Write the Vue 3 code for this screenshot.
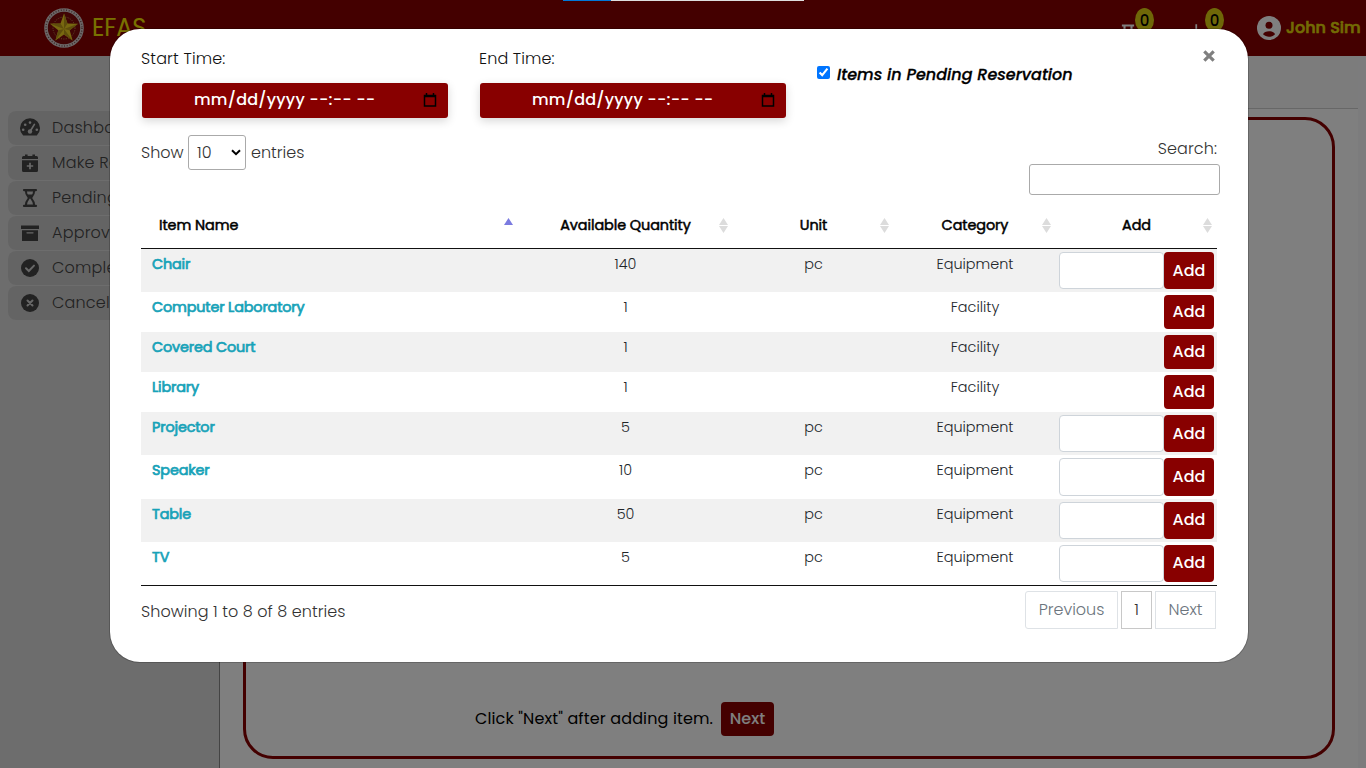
<script setup>
import { ref } from 'vue'

const menu = [
  { label: 'Dashboard', icon: 'gauge' },
  { label: 'Make Reservation', icon: 'plus' },
  { label: 'Pending', icon: 'hourglass' },
  { label: 'Approved', icon: 'archive' },
  { label: 'Completed', icon: 'check' },
  { label: 'Cancelled', icon: 'cancel' },
]
const columns = [
  { label: 'Item Name', cls: 'h-name' },
  { label: 'Available Quantity', cls: 'h-qty' },
  { label: 'Unit', cls: 'h-unit' },
  { label: 'Category', cls: 'h-cat' },
  { label: 'Add', cls: 'h-add' },
]
const items = [
  { name: 'Chair', qty: 140, unit: 'pc', category: 'Equipment' },
  { name: 'Computer Laboratory', qty: 1, unit: '', category: 'Facility' },
  { name: 'Covered Court', qty: 1, unit: '', category: 'Facility' },
  { name: 'Library', qty: 1, unit: '', category: 'Facility' },
  { name: 'Projector', qty: 5, unit: 'pc', category: 'Equipment' },
  { name: 'Speaker', qty: 10, unit: 'pc', category: 'Equipment' },
  { name: 'Table', qty: 50, unit: 'pc', category: 'Equipment' },
  { name: 'TV', qty: 5, unit: 'pc', category: 'Equipment' },
]
const pendingOnly = ref(true)
</script>

<template>
  <div class="page">
    <header class="topbar">
      <svg class="seal" viewBox="0 0 40 40">
        <circle cx="20" cy="20" r="18" fill="#800b0b" stroke="#d6cccc" stroke-width="3.6" />
        <circle cx="20" cy="20" r="18" fill="none" stroke="#7a5050" stroke-width="1.4" stroke-dasharray="1 1.7" />
        <circle cx="20" cy="20" r="11" fill="none" stroke="#c49a55" stroke-width="1" stroke-dasharray="1 1.4" />
        <path d="M20 5.5 23.5 15.6 34 15.8 25.7 22.2 28.6 32.6 20 26.5 11.4 32.6 14.3 22.2 6 15.8 16.5 15.6Z" fill="#f0d020" />
        <path d="M20 5.5V21L23.5 15.6ZM34 15.8 20 21 25.7 22.2ZM28.6 32.6 20 21V26.5ZM11.4 32.6 20 21 14.3 22.2ZM6 15.8 20 21 16.5 15.6Z" fill="#bd9a18" />
      </svg>
      <span class="brand">EFAS</span>
      <div class="tools">
        <div class="tool tool-a">
          <svg viewBox="0 0 16 20"><path d="M1 1.500h14M4 2v5l4 4-4 4v4M12 2v5l-4 4 4 4v4" fill="none" stroke="#fff" stroke-width="2.400" /></svg>
          <span class="count">0</span>
        </div>
        <div class="tool tool-b">
          <svg viewBox="0 0 16 20"><path d="M6 0v14M0 8l6 7 6-7" fill="none" stroke="#fff" stroke-width="2" /></svg>
          <span class="count">0</span>
        </div>
        <svg class="avatar" viewBox="0 0 24 24">
          <circle cx="12" cy="12" r="12" fill="#fff" />
          <circle cx="12" cy="9.300" r="3.500" fill="#800" />
          <path d="M6 18.200c1.200-4 10.800-4 12 0-3.200 3.300-8.800 3.300-12 0Z" fill="#800" />
        </svg>
        <span class="user">John Sim</span>
      </div>
    </header>

    <div class="body">
      <nav class="sidebar">
        <a v-for="m in menu" :key="m.label" class="nav-item">
          <svg v-if="m.icon === 'gauge'" viewBox="0 0 20 20">
            <path d="M3.200 17.600A10 10 0 1 1 16.800 17.600Z" fill="#444" />
            <g fill="#d0d0d0"><circle cx="10" cy="4.600" r="1.300" /><circle cx="5.200" cy="6.800" r="1.300" /><circle cx="3.200" cy="11.800" r="1.300" /><circle cx="16.800" cy="11.800" r="1.300" /><circle cx="10" cy="13.500" r="2.200" /></g>
            <path d="M10 13.500 14.400 6.400" stroke="#d0d0d0" stroke-width="1.700" stroke-linecap="round" />
          </svg>
          <svg v-else-if="m.icon === 'plus'" viewBox="0 0 20 20">
            <path d="M2 6V4.500Q2 3 3.500 3H5V1.500h2.600V3h4.800V1.500H15V3h1.500Q18 3 18 4.500V6ZM2 7.300H18V17.500Q18 19 16.500 19H3.500Q2 19 2 17.500Z" fill="#444" />
            <path d="M10 9.800v6.400M6.800 13h6.400" stroke="#d0d0d0" stroke-width="1.700" />
          </svg>
          <svg v-else-if="m.icon === 'hourglass'" viewBox="0 0 20 20">
            <path d="M4 2.100H16M4 17.900H16" stroke="#444" stroke-width="2.200" stroke-linecap="round" />
            <path d="M5.800 2.500C5.800 7 8 8.600 9 10c-1 1.400-3.200 3-3.200 7.500H14.200C14.200 13 12 11.400 11 10c1-1.400 3.200-3 3.200-7.500Z" fill="#d0d0d0" stroke="#444" stroke-width="2" />
            <path d="M6.500 6.500H13.500L10 10.500Z" fill="#444" />
          </svg>
          <svg v-else-if="m.icon === 'archive'" viewBox="0 0 20 20">
            <path d="M1 2.500H19V6H1ZM2 7.300H18V18H2Z" fill="#444" />
            <path d="M7 9.800h6" stroke="#d0d0d0" stroke-width="1.300" stroke-linecap="round" />
          </svg>
          <svg v-else viewBox="0 0 20 20">
            <circle cx="10" cy="10" r="9" fill="#444" />
            <path v-if="m.icon === 'check'" d="M6 10.300 8.800 13 14 7.600" fill="none" stroke="#d0d0d0" stroke-width="2" stroke-linecap="round" />
            <path v-else d="M7.500 7.500 12.500 12.500M12.500 7.500 7.500 12.500" stroke="#d0d0d0" stroke-width="2" stroke-linecap="round" />
          </svg>
          <span>{{ m.label }}</span>
        </a>
      </nav>
      <main class="content">
        <div class="strip"></div>
        <section class="panel">
          <div class="hint">
            <span class="hint-text">Click "Next" after adding item.</span>
            <button class="btn hint-btn">Next</button>
          </div>
        </section>
      </main>
      <div class="gutter"></div>
    </div>

    <div class="backdrop">
      <div class="loader"><i></i></div>
      <div class="modal">
        <div class="filters">
          <label class="field"><span class="lbl-start">Start Time:</span>
            <div class="date"><span>mm/dd/yyyy --:-- --</span>
              <svg viewBox="0 0 14 14"><path d="M1.500 2.500h11v10.500h-11zM1 3.600h12M3.500 0v2.500M10.500 0v2.500" fill="none" stroke="#000" stroke-width="1.500" /></svg>
            </div>
          </label>
          <label class="field"><span class="lbl-end">End Time:</span>
            <div class="date"><span>mm/dd/yyyy --:-- --</span>
              <svg viewBox="0 0 14 14"><path d="M1.500 2.500h11v10.500h-11zM1 3.600h12M3.500 0v2.500M10.500 0v2.500" fill="none" stroke="#000" stroke-width="1.500" /></svg>
            </div>
          </label>
          <label class="pending">
            <input v-model="pendingOnly" type="checkbox" />
            <span>Items in Pending Reservation</span>
          </label>
          <svg class="close" viewBox="0 0 12 12"><path d="M1.300 1.300 10.700 10.700M10.700 1.300 1.300 10.700" stroke="#7f7f7f" stroke-width="3.200" /></svg>
        </div>

        <div class="controls">
          <div class="length">
            <span class="show">Show</span>
            <div class="select"><span>10</span>
              <svg viewBox="0 0 10 7"><path d="M1 1.200 5 5.200 9 1.200" fill="none" stroke="#000" stroke-width="2" /></svg>
            </div>
            <span class="entries">entries</span>
          </div>
          <div class="search"><span>Search:</span><input type="text" /></div>
        </div>

        <div class="table">
          <div class="row head">
            <div v-for="(c, i) in columns" :key="c.label" class="th" :class="c.cls">
              <span>{{ c.label }}</span>
              <svg class="sort" viewBox="0 0 9 16">
                <path d="M4.500 0 9 7H0Z" :fill="i === 0 ? '#7b7be0' : '#dcdcdc'" />
                <path v-if="i !== 0" d="M4.500 15 9 8H0Z" fill="#dcdcdc" />
              </svg>
            </div>
          </div>
          <div v-for="it in items" :key="it.name" class="row item" :class="{ tall: it.unit }">
            <div class="td name">{{ it.name }}</div>
            <div class="td">{{ it.qty }}</div>
            <div class="td">{{ it.unit }}</div>
            <div class="td cat">{{ it.category }}</div>
            <div class="act">
              <input v-if="it.unit" type="text" />
              <button class="btn">Add</button>
            </div>
          </div>
        </div>

        <div class="footer">
          <span class="info">Showing 1 to 8 of 8 entries</span>
          <div class="pager">
            <span class="pg prev">Previous</span>
            <span class="pg cur">1</span>
            <span class="pg next">Next</span>
          </div>
        </div>
      </div>
    </div>
  </div>
</template>

<style>
body {
  margin: 0;
  overflow: hidden;
}
</style>

<style scoped>
* {
  box-sizing: border-box;
}
.page {
  position: relative;
  width: 1366px;
  height: 768px;
  overflow: hidden;
  background: #fff;
  color: #212529;
  font: 300 16px/24px Poppins, Inter, sans-serif;
  white-space: nowrap;
}
svg {
  display: block;
  flex: none;
}
.topbar {
  display: flex;
  align-items: center;
  height: 56px;
  padding-left: 44px;
  background: #880000;
}
.seal {
  width: 40px;
  height: 40px;
}
.brand {
  margin-left: 8px;
  color: #f2e300;
  font-size: 24px;
  font-weight: 400;
  letter-spacing: -0.1px;
}
.tools {
  display: flex;
  align-items: center;
  height: 56px;
  margin-left: auto;
  padding-right: 5px;
}
.tool {
  position: relative;
  width: 70px;
}
.tool svg {
  width: 14px;
  height: 18px;
  margin-top: 10px;
}
.tool-b {
  width: 66px;
}
.count {
  position: absolute;
  left: 14px;
  top: -6px;
  width: 19px;
  height: 24px;
  border-radius: 50%;
  background: #dfcf10;
  color: #000;
  font-size: 15px;
  font-weight: 500;
  line-height: 25px;
  text-align: center;
}
.avatar {
  width: 24px;
  height: 24px;
}
.user {
  width: 75px;
  margin-left: 5px;
  color: #e5d608;
  font-size: 16px;
  font-weight: 500;
  letter-spacing: 0;
  -webkit-text-stroke: 0.6px #e5d608;
}
.body {
  display: flex;
  height: 712px;
}
.sidebar {
  width: 220px;
  padding: 55px 8px 0;
  border-right: 1px solid #888;
  background: #dbdbdb;
}
.nav-item {
  display: flex;
  align-items: center;
  height: 34px;
  margin-bottom: 1px;
  padding-left: 12px;
  border-radius: 8px;
  background: #c9c9c9;
  color: #444;
  letter-spacing: 0.2px;
}
.nav-item svg {
  width: 20px;
  height: 20px;
  margin-right: 12px;
}
.content {
  flex: 1;
  padding-left: 23px;
}
.strip {
  height: 53px;
  margin-left: -23px;
  border-bottom: 1px solid #cfcfcf;
  background: #f8f8f8;
}
.panel {
  display: flex;
  flex-direction: column;
  justify-content: flex-end;
  width: 1092px;
  height: 642px;
  margin-top: 8px;
  padding-bottom: 20px;
  border: 3px solid #880000;
  border-radius: 30px;
}
.hint {
  display: flex;
  align-items: center;
  margin-left: 229px;
}
.hint-text {
  width: 246px;
  color: #000;
  font-weight: 400;
  letter-spacing: 0.13px;
}
.gutter {
  width: 8px;
  background: #f8f8fb;
}
.btn {
  width: 50px;
  padding: 0;
  border: 0;
  border-radius: 4px;
  background: #880000;
  color: #fff;
  font: 500 16px/24px Poppins, Inter, sans-serif;
}
.hint-btn {
  width: 53px;
  height: 34px;
}
.backdrop {
  position: absolute;
  inset: 0;
  display: flex;
  flex-direction: column;
  align-items: flex-start;
  background: rgba(0, 0, 0, 0.5);
}
.loader {
  width: 241px;
  height: 1px;
  margin-left: 563px;
  background: #dedede;
}
.loader i {
  display: block;
  width: 48px;
  height: 1px;
  background: #0078d7;
}
.modal {
  width: 1140px;
  height: 635px;
  margin: 27px 0 0 109px;
  padding: 18px 28px 0 31px;
  border: 1px solid rgba(0, 0, 0, 0.2);
  border-radius: 31px;
  background: #fff;
  background-clip: padding-box;
}
.filters {
  display: flex;
  height: 88px;
}
.field {
  width: 338px;
  color: #111;
}
.field > span {
  display: block;
}
.lbl-start {
  letter-spacing: 0.15px;
}
.lbl-end {
  letter-spacing: 0.1px;
}
.date {
  display: flex;
  align-items: center;
  width: 306px;
  height: 35px;
  margin: 12px 0 0 1px;
  padding: 0 11px 2px 52px;
  border-radius: 3px;
  background: #880000;
  box-shadow: 0 3px 10px rgba(0, 0, 0, 0.16);
  color: #fff;
  font-weight: 500;
}
.date span {
  letter-spacing: 0.23px;
}
.date svg {
  width: 14px;
  height: 14px;
  margin-left: auto;
}
.pending {
  display: flex;
  align-items: flex-start;
  color: #000;
  font-weight: 500;
  font-style: italic;
  letter-spacing: 0;
  -webkit-text-stroke: 0.3px #000;
}
.pending input {
  width: 13px;
  height: 13px;
  margin: 19px 7px 0 0;
  accent-color: #0075ff;
}
.pending span {
  margin-top: 16px;
}
.close {
  width: 12px;
  height: 12px;
  margin: 3px 5px 0 auto;
}
.controls {
  display: flex;
  justify-content: space-between;
  height: 70px;
  color: #333;
}
.length {
  display: flex;
  align-items: center;
  height: 35px;
}
.show {
  width: 47px;
}
.select {
  display: flex;
  align-items: center;
  justify-content: space-between;
  width: 58px;
  height: 35px;
  padding: 0 4px 0 8px;
  border: 1px solid #aaa;
  border-radius: 3px;
}
.select svg {
  width: 10px;
  height: 7px;
}
.entries {
  margin-left: 5px;
}
.search {
  display: flex;
  flex-direction: column;
  align-items: flex-end;
  padding-top: 2px;
  letter-spacing: 0.1px;
}
.search span {
  margin-right: 3px;
}
.search input {
  width: 191px;
  height: 31px;
  margin-top: 3px;
  border: 1px solid #aaa;
  border-radius: 3px;
}
.table {
  width: 1076px;
  border-bottom: 1px solid #111;
}
.row {
  display: grid;
  grid-template-columns: 377px 215px 161px 162px 161px;
}
.head {
  height: 44px;
  border-bottom: 1px solid #111;
}
.th {
  position: relative;
  padding-top: 8px;
  color: #000;
  font-size: 14.4px;
  font-weight: 400;
  letter-spacing: -0.08px;
  text-align: center;
  -webkit-text-stroke: 0.5px #000;
}
.h-name {
  padding-left: 18px;
  text-align: left;
}
.sort {
  position: absolute;
  right: 5px;
  top: 13px;
  width: 9px;
  height: 16px;
}
.item {
  height: 40px;
}
.tall {
  height: 43.2px;
}
.item:nth-child(even) {
  background: #f1f1f1;
}
.td {
  padding-top: 3px;
  font-size: 14.4px;
  text-align: center;
}
.name {
  padding-left: 11px;
  color: #17a2b8;
  font-weight: 400;
  letter-spacing: -0.15px;
  text-align: left;
  -webkit-text-stroke: 0.7px #17a2b8;
}
.act {
  display: flex;
  justify-content: flex-end;
  padding: 3px 3px 3px 0;
}
.act input {
  width: 105px;
  border: 1px solid #ced4da;
  border-radius: 4px;
}
.footer {
  display: flex;
  justify-content: space-between;
  padding: 5px 4px 0 0;
  color: #333;
}
.info {
  padding-top: 9px;
  letter-spacing: 0.06px;
}
.pager {
  display: flex;
  gap: 3px;
}
.pg {
  height: 38px;
  border: 1px solid #dee2e6;
  color: #6c757d;
  line-height: 36px;
  text-align: center;
}
.prev {
  width: 93px;
  border-radius: 3px 0 0 3px;
}
.cur {
  width: 31px;
  border-color: #c8c8c8;
  color: #333;
}
.next {
  width: 61px;
}
</style>
